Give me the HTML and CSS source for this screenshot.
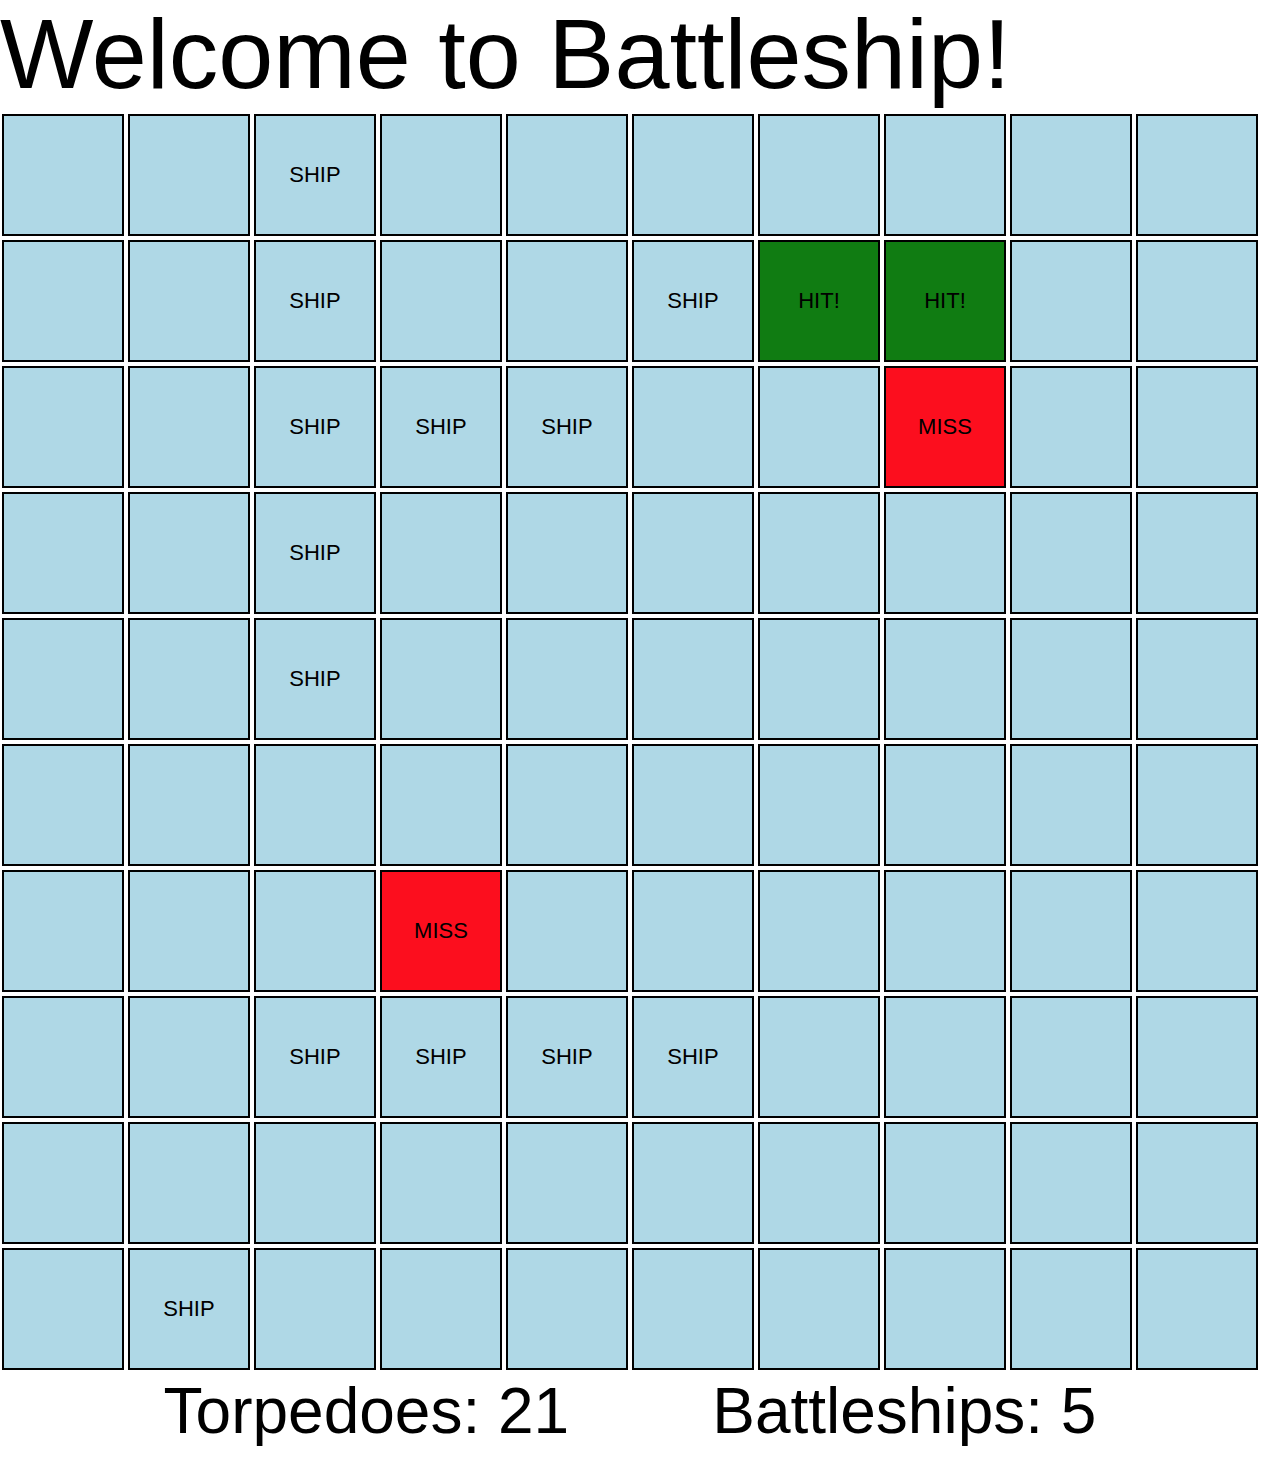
FILE: index.html
```html
<!DOCTYPE html>
<html lang="en">
<head>
    <meta charset="UTF-8">
    <title>Battleship</title>
    <link rel="stylesheet" href="styles.css">
</head>
<body>
    <h1 class="title">Welcome to Battleship!</h1>

    <div class="board" id="board"></div>

    <div class="stats">
        <span>Torpedoes: <span id="torpedoes">21</span></span>
        <span>Battleships: <span id="ships">5</span></span>
    </div>

    <script>
        // 0 = water, 1 = ship, 2 = hit, 3 = miss
        const board = [
            [0,0,1,0,0,0,0,0,0,0],
            [0,0,1,0,0,1,2,2,0,0],
            [0,0,1,1,1,0,0,3,0,0],
            [0,0,1,0,0,0,0,0,0,0],
            [0,0,1,0,0,0,0,0,0,0],
            [0,0,0,0,0,0,0,0,0,0],
            [0,0,0,3,0,0,0,0,0,0],
            [0,0,1,1,1,1,0,0,0,0],
            [0,0,0,0,0,0,0,0,0,0],
            [0,1,0,0,0,0,0,0,0,0]
        ];
        const labels = ["", "SHIP", "HIT!", "MISS"];
        const classes = ["", "ship", "hit", "miss"];

        const boardEl = document.getElementById("board");
        board.forEach((row, r) => {
            row.forEach((val, c) => {
                const cell = document.createElement("div");
                cell.className = "cell " + classes[val];
                cell.id = "c" + r + c;
                cell.textContent = labels[val];
                boardEl.appendChild(cell);
            });
        });
    </script>
</body>
</html>
```

FILE: styles.css
```css
body {
    font-family: "Liberation Sans", Arial, Helvetica, sans-serif;
    margin: 0;
    padding: 0;
    background: white;
    color: black;
}

.title {
    font-size: 99px;
    font-weight: normal;
    line-height: 114px;
    margin: -3px 0 1px 0;
    white-space: nowrap;
}

.board {
    display: grid;
    grid-template-columns: repeat(10, 122px);
    grid-auto-rows: 122px;
    gap: 4px;
    padding: 2px;
    width: 1256px;
}

.cell {
    box-sizing: border-box;
    border: 2px solid black;
    background: #afd8e6;
    display: flex;
    align-items: center;
    justify-content: center;
    font-size: 22px;
}

.cell.hit {
    background: #107c12;
}

.cell.miss {
    background: #fc0e1e;
}

.stats {
    display: flex;
    justify-content: center;
    gap: 143px;
    width: 1260px;
    font-size: 64px;
    padding-top: 2px;
}
```
